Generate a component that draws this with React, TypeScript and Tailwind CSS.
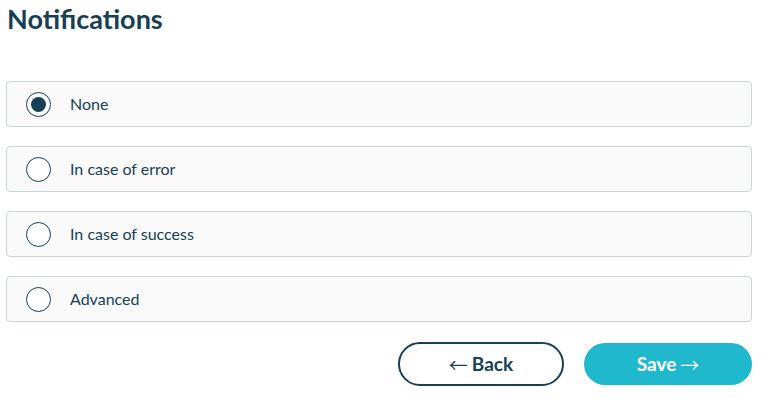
import React, { useState } from 'react';

const options = [
  { id: 'none', label: 'None' },
  { id: 'error', label: 'In case of error' },
  { id: 'success', label: 'In case of success' },
  { id: 'advanced', label: 'Advanced' },
];

export default function App() {
  const [selected, setSelected] = useState('none');

  return (
    <div className="w-[746px] ml-[6px] pt-[2px] font-['Lato',sans-serif] text-[#173f55]">
      <h1 className="text-[27px] leading-[34px] font-bold ml-[1px]">Notifications</h1>

      {/* Options */}
      <div className="mt-[45px] flex flex-col gap-[19px]">
        {options.map((opt) => (
          <label
            key={opt.id}
            className="h-[46px] flex items-center bg-[#fafafa] border border-[#cbd6d6] rounded-[4px] cursor-pointer"
            onClick={() => setSelected(opt.id)}
          >
            <span className="ml-[19px] w-[25px] h-[25px] rounded-full border-[1.5px] border-[#173f55] bg-white flex items-center justify-center">
              {selected === opt.id && <span className="w-[15px] h-[15px] rounded-full bg-[#173f55]" />}
            </span>
            <span className="ml-[19px] text-[16px]">{opt.label}</span>
          </label>
        ))}
      </div>

      {/* Actions */}
      <div className="mt-[20px] flex justify-end gap-[20px]">
        <button className="w-[166px] h-[44px] rounded-full border-2 border-[#173f55] bg-white text-[19px] font-bold text-[#173f55] flex items-center justify-center">
          <span className="font-['Noto_Sans_CJK_JP',sans-serif] font-normal leading-none">←</span>
          <span className="ml-[4px]">Back</span>
        </button>
        <button className="w-[168px] h-[42px] mt-[1px] rounded-full bg-[#1fb8cd] text-[19px] font-bold text-white flex items-center justify-center">
          <span className="mr-[4px]">Save</span>
          <span className="font-['Noto_Sans_CJK_JP',sans-serif] font-normal leading-none">→</span>
        </button>
      </div>
    </div>
  );
}
